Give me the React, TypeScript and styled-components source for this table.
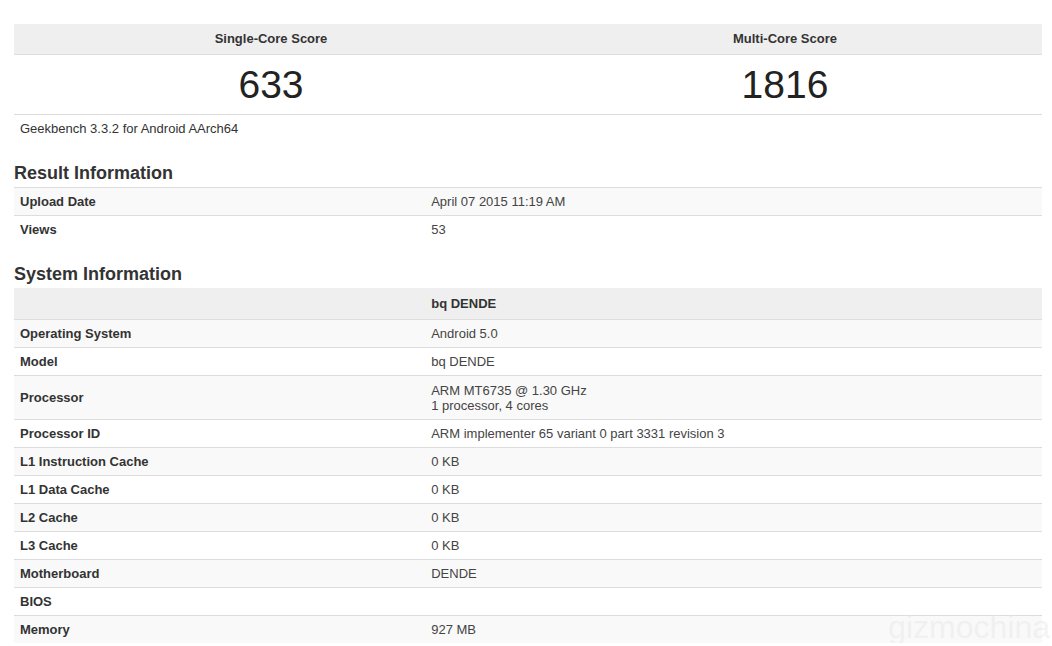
import React from "react";
import styled, { createGlobalStyle } from "styled-components";

const Global = createGlobalStyle`
  html, body { margin: 0; padding: 0; background: #fff; }
  body { font-family: "Liberation Sans", Arial, Helvetica, sans-serif; color: #333; font-size: 13px; }
  th, td { box-sizing: border-box; }
`;

const Page = styled.div`
  position: relative;
  width: 1028px;
  margin: 24px 0 0 14px;
`;

const Table = styled.table`
  width: 100%;
  border-collapse: collapse;
  border-spacing: 0;
  table-layout: fixed;
`;

const Col = styled.col<{ $w: string }>`
  width: ${(p) => p.$w};
`;

const ScoreHead = styled.th`
  background: #efefef;
  border-bottom: 1px solid #dedede;
  padding: 8px 6px;
  line-height: 14px;
  font-size: 13px;
  font-weight: bold;
  color: #333;
  text-align: center;
`;

const ScoreValue = styled.td`
  padding: 6px 6px;
  line-height: 47px;
  font-size: 39px;
  color: #222;
  text-align: center;
`;

const Footnote = styled.td`
  border-top: 1px solid #dddddd;
  padding: 7px 6px 6px;
  line-height: 14px;
  font-size: 13px;
  color: #333;
`;

const Heading = styled.h2`
  margin: 21px 0 4px;
  font-size: 18px;
  line-height: 20px;
  font-weight: bold;
  color: #333;
`;

const HeadCell = styled.th`
  background: #efefef;
  padding: 9px 6px 8px;
  line-height: 14px;
  font-size: 13px;
  font-weight: bold;
  color: #333;
  text-align: left;
`;

const Row = styled.tr<{ $striped: boolean }>`
  background: ${(p) => (p.$striped ? "#f9f9f9" : "#ffffff")};
`;

const Label = styled.td`
  border-top: 1px solid #dddddd;
  padding: 7px 6px 6px;
  line-height: 14px;
  font-size: 13px;
  font-weight: bold;
  color: #333;
  vertical-align: middle;
`;

const Value = styled.td<{ $multi: boolean }>`
  border-top: 1px solid #dddddd;
  padding: 7px 6px 6px;
  line-height: ${(p) => (p.$multi ? "15px" : "14px")};
  font-size: 13px;
  color: #444;
  vertical-align: middle;
`;

const Watermark = styled.div`
  position: absolute;
  right: -8px;
  top: 583px;
  font-family: "Liberation Sans", Arial, sans-serif;
  font-size: 32px;
  line-height: 40px;
  color: rgba(230, 230, 230, 0.45);
  white-space: nowrap;
  pointer-events: none;
`;

type Info = { label: string; value: string[] };

const resultInfo: Info[] = [
  { label: "Upload Date", value: ["April 07 2015 11:19 AM"] },
  { label: "Views", value: ["53"] },
];

const systemInfo: Info[] = [
  { label: "Operating System", value: ["Android 5.0"] },
  { label: "Model", value: ["bq DENDE"] },
  { label: "Processor", value: ["ARM MT6735 @ 1.30 GHz", "1 processor, 4 cores"] },
  { label: "Processor ID", value: ["ARM implementer 65 variant 0 part 3331 revision 3"] },
  { label: "L1 Instruction Cache", value: ["0 KB"] },
  { label: "L1 Data Cache", value: ["0 KB"] },
  { label: "L2 Cache", value: ["0 KB"] },
  { label: "L3 Cache", value: ["0 KB"] },
  { label: "Motherboard", value: ["DENDE"] },
  { label: "BIOS", value: [] },
  { label: "Memory", value: ["927 MB"] },
];

function InfoCols() {
  return (
    <colgroup>
      <Col $w="40%" />
      <Col $w="60%" />
    </colgroup>
  );
}

function InfoRows({ rows }: { rows: Info[] }) {
  return (
    <>
      {rows.map((r, i) => (
        <Row key={r.label} $striped={i % 2 === 0}>
          <Label>{r.label}</Label>
          <Value $multi={r.value.length > 1}>
            {r.value.map((line, j) => (
              <React.Fragment key={j}>
                {j > 0 && <br />}
                {line}
              </React.Fragment>
            ))}
          </Value>
        </Row>
      ))}
    </>
  );
}

export default function App() {
  return (
    <>
      <Global />
      <Page>
        <Table>
          <colgroup>
            <Col $w="50%" />
            <Col $w="50%" />
          </colgroup>
          <thead>
            <tr>
              <ScoreHead>Single-Core Score</ScoreHead>
              <ScoreHead>Multi-Core Score</ScoreHead>
            </tr>
          </thead>
          <tbody>
            <tr>
              <ScoreValue>633</ScoreValue>
              <ScoreValue>1816</ScoreValue>
            </tr>
            <tr>
              <Footnote colSpan={2}>Geekbench 3.3.2 for Android AArch64</Footnote>
            </tr>
          </tbody>
        </Table>

        <Heading>Result Information</Heading>
        <Table>
          <InfoCols />
          <tbody>
            <InfoRows rows={resultInfo} />
          </tbody>
        </Table>

        <Heading>System Information</Heading>
        <Table>
          <InfoCols />
          <thead>
            <tr>
              <HeadCell></HeadCell>
              <HeadCell>bq DENDE</HeadCell>
            </tr>
          </thead>
          <tbody>
            <InfoRows rows={systemInfo} />
          </tbody>
        </Table>
        <Watermark>gizmochina</Watermark>
      </Page>
    </>
  );
}
